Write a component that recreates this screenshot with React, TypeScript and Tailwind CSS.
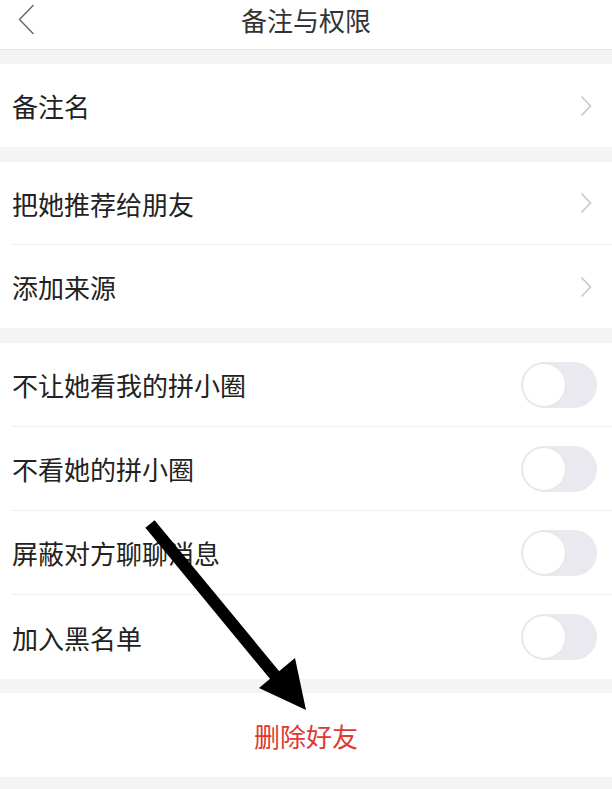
import React from 'react';

const font = { fontFamily: '"Noto Sans CJK SC", "Noto Sans", sans-serif' };

const Chevron = () => (
  <svg width="12" height="22" viewBox="0 0 12 22" fill="none">
    <path d="M1.5 1.5 L10.5 11 L1.5 20.5" stroke="#c8c8cc" strokeWidth="1.6" />
  </svg>
);

const Toggle = () => (
  <div className="w-[76px] h-[46px] rounded-full bg-[#e9e9ef] relative shrink-0">
    <div className="absolute left-[1px] top-[1px] w-[44px] h-[44px] rounded-full bg-white border border-[#e4e4ea]" />
  </div>
);

const NavRow = ({ label, divider }: { label: string; divider?: boolean }) => (
  <div className="h-[83px] flex items-center pl-3">
    <div className={`flex-1 h-full flex items-center justify-between pr-5 ${divider ? 'border-b border-[#efefef]' : ''}`}>
      <span className="text-[26px] text-[#222]">{label}</span>
      <Chevron />
    </div>
  </div>
);

const ToggleRow = ({ label, divider }: { label: string; divider?: boolean }) => (
  <div className="h-[84px] flex items-center pl-3">
    <div className={`flex-1 h-full flex items-center justify-between pr-[15px] ${divider ? 'border-b border-[#efefef]' : ''}`}>
      <span className="text-[26px] text-[#222]">{label}</span>
      <Toggle />
    </div>
  </div>
);

export default function App() {
  return (
    <div className="w-[612px] h-[789px] bg-[#f4f4f4] relative overflow-hidden" style={font}>
      {/* Header */}
      <header className="h-[50px] bg-white border-b border-[#e6e6e6] relative flex items-center justify-center">
        <svg className="absolute left-[18px] top-[4px]" width="17" height="31" viewBox="0 0 17 31" fill="none">
          <path d="M15.5 1 L1.5 15.5 L15.5 30" stroke="#666" strokeWidth="1.4" />
        </svg>
        <h1 className="text-[26px] text-[#333] -mt-[10px]">备注与权限</h1>
      </header>

      <div className="mt-[14px] bg-white">
        <NavRow label="备注名" />
      </div>

      <div className="mt-[15px] bg-white">
        <NavRow label="把她推荐给朋友" divider />
        <NavRow label="添加来源" />
      </div>

      <div className="mt-[15px] bg-white">
        <ToggleRow label="不让她看我的拼小圈" divider />
        <ToggleRow label="不看她的拼小圈" divider />
        <ToggleRow label="屏蔽对方聊聊消息" divider />
        <ToggleRow label="加入黑名单" />
      </div>

      <div className="mt-[14px] bg-white h-[84px] flex items-center justify-center">
        <span className="text-[26px] text-[#e0392f]">删除好友</span>
      </div>

      {/* Annotation arrow */}
      <svg className="absolute left-0 top-0 pointer-events-none" width="612" height="789" viewBox="0 0 612 789">
        <line x1="150" y1="524" x2="282" y2="684" stroke="#000" strokeWidth="12" />
        <polygon points="306,710 259,688 295,658" fill="#000" />
      </svg>
    </div>
  );
}
